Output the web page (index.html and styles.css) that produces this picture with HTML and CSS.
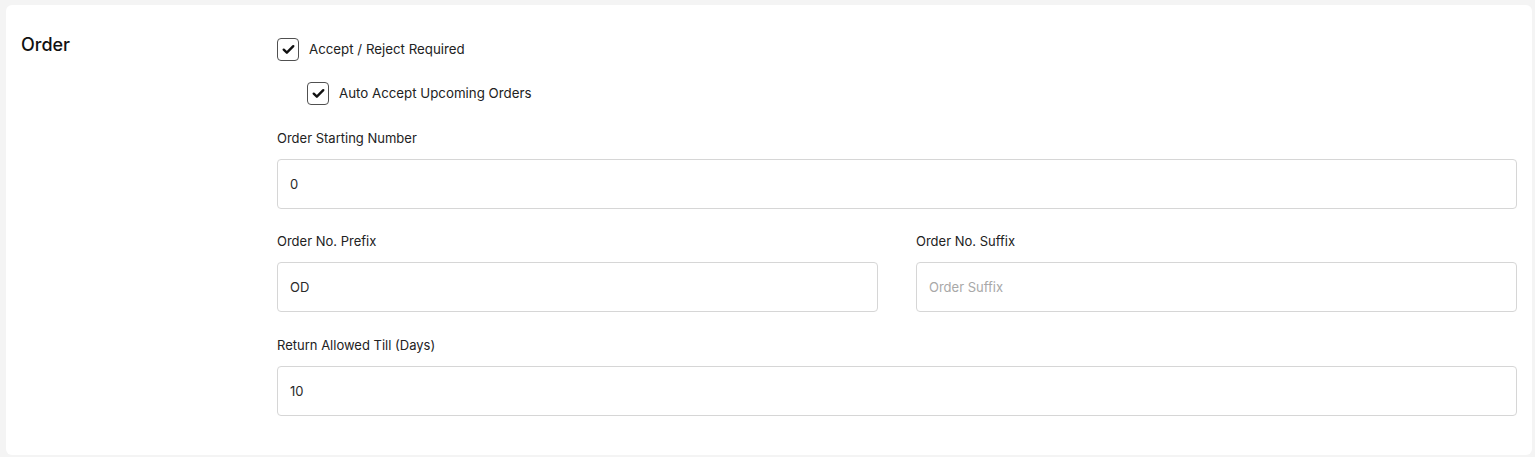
FILE: index.html
```html
<!DOCTYPE html>
<html lang="en">
<head>
<meta charset="utf-8">
<title>Order settings</title>
<link rel="stylesheet" href="styles.css">
</head>
<body>
<section class="card">
  <h2 class="section-title">Order</h2>
  <div class="section-body">
    <label class="check-row">
      <span class="checkbox"><svg viewBox="0 0 14 12" width="13" height="11"><path d="M1.8 6.2l3.4 3.3L12.2 2.4" fill="none" stroke="#111" stroke-width="2.6" stroke-linecap="round" stroke-linejoin="round"/></svg></span>
      <span class="check-label">Accept / Reject Required</span>
    </label>
    <label class="check-row nested">
      <span class="checkbox"><svg viewBox="0 0 14 12" width="13" height="11"><path d="M1.8 6.2l3.4 3.3L12.2 2.4" fill="none" stroke="#111" stroke-width="2.6" stroke-linecap="round" stroke-linejoin="round"/></svg></span>
      <span class="check-label">Auto Accept Upcoming Orders</span>
    </label>
    <div class="field">
      <div class="field-label">Order Starting Number</div>
      <div class="input">0</div>
    </div>
    <div class="field-row">
      <div class="field">
        <div class="field-label">Order No. Prefix</div>
        <div class="input">OD</div>
      </div>
      <div class="field">
        <div class="field-label">Order No. Suffix</div>
        <div class="input placeholder">Order Suffix</div>
      </div>
    </div>
    <div class="field last">
      <div class="field-label">Return Allowed Till (Days)</div>
      <div class="input">10</div>
    </div>
  </div>
</section>
</body>
</html>
```

FILE: styles.css
```css
* { box-sizing: border-box; }
html, body { margin: 0; padding: 0; }
body {
  background: #f4f4f4;
  font-family: Inter, "Noto Sans", sans-serif;
  color: #1f1f1f;
  padding: 5px 3px 2px 6px;
}
.card {
  background: #ffffff;
  border-radius: 6px;
  padding: 33px 15px 39px 15px;
  display: flex;
  align-items: flex-start;
}
.section-title {
  width: 256px;
  flex: 0 0 256px;
  margin: -4px 0 0 0;
  font-size: 18px;
  font-weight: 500;
  line-height: 22px;
  color: #111;
}
.section-body {
  flex: 1;
  display: flex;
  flex-direction: column;
}
.check-row {
  display: flex;
  align-items: center;
  gap: 10px;
  height: 23px;
}
.check-row + .check-row { margin-top: 21px; }
.check-row.nested { margin-left: 30px; }
.checkbox {
  width: 22px;
  height: 23px;
  border: 1px solid #505050;
  border-radius: 4px;
  display: flex;
  align-items: center;
  justify-content: center;
}
.check-label {
  font-size: 13.3px;
  line-height: 16px;
  color: #222;
  margin-top: -2px;
}
.field { display: flex; flex-direction: column; margin-top: 25px; }
.field-row {
  display: grid;
  grid-template-columns: 1fr 1fr;
  column-gap: 38px;
  margin-top: -1px;
}
.field.last { margin-top: 25px; }
.field-label {
  font-size: 13px;
  line-height: 16px;
  color: #222;
  margin-bottom: 13px;
}
.input {
  height: 50px;
  border: 1px solid #d6d6d6;
  border-radius: 4px;
  padding: 0 12px;
  display: flex;
  align-items: center;
  font-size: 13px;
  color: #2a2a2a;
}
.input.placeholder { color: #a8a8a8; }
```
